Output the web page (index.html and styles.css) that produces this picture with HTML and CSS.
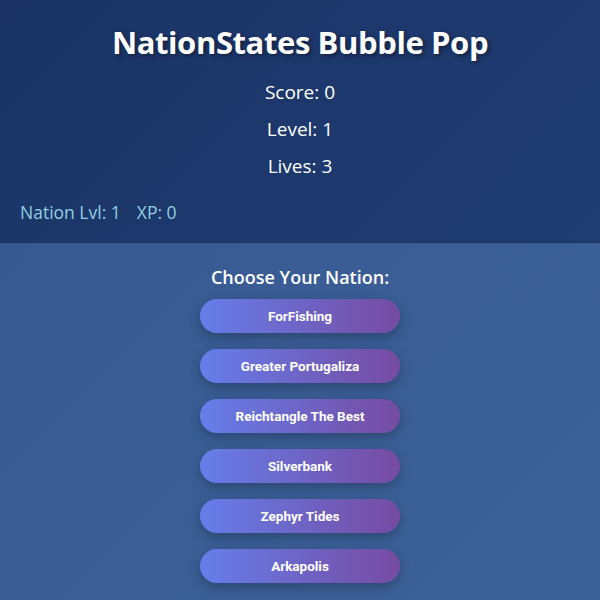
FILE: index.html
```html
<!DOCTYPE html>
<html>
<head>
<meta charset="utf-8">
<link rel="stylesheet" href="styles.css">
</head>
<body>
<div class="app">
  <header class="header">
    <h1 class="title">NationStates Bubble Pop</h1>
    <div class="stat">Score: 0</div>
    <div class="stat">Level: 1</div>
    <div class="stat">Lives: 3</div>
    <div class="nation-info"><span>Nation Lvl: 1</span><span>XP: 0</span></div>
  </header>
  <main class="chooser">
    <h2 class="choose-title">Choose Your Nation:</h2>
    <button class="nation-btn">ForFishing</button>
    <button class="nation-btn">Greater Portugaliza</button>
    <button class="nation-btn">Reichtangle The Best</button>
    <button class="nation-btn">Silverbank</button>
    <button class="nation-btn">Zephyr Tides</button>
    <button class="nation-btn">Arkapolis</button>
  </main>
</div>
</body>
</html>
```
FILE: styles.css
```css
html, body {
  margin: 0;
  padding: 0;
  height: 100%;
}
body {
  font-family: "Open Sans", "Noto Sans", sans-serif;
  color: #fff;
  background: linear-gradient(135deg, #35578f 0%, #3d6299 100%);
  overflow: hidden;
}
.app {
  display: flex;
  flex-direction: column;
  min-height: 100%;
}
.header {
  background: linear-gradient(135deg, #1b3366 0%, #1f3d72 100%);
  padding: 22px 20px 20px;
  height: 243px;
  box-sizing: border-box;
  display: flex;
  flex-direction: column;
  align-items: center;
  border-bottom: 1px solid #1a3060;
}
.title {
  margin: 0;
  font-size: 31px;
  font-weight: 700;
  letter-spacing: -0.4px;
  line-height: 41px;
  text-shadow: 2px 2px 4px rgba(0,0,0,0.4);
}
.stat {
  font-size: 19px;
  line-height: 25px;
  margin-top: 12px;
}
.stat:first-of-type {
  margin-top: 17px;
}
.nation-info {
  align-self: flex-start;
  margin-top: 21px;
  font-size: 17.5px;
  color: #90d0e0;
  display: flex;
  gap: 16px;
}
.chooser {
  display: flex;
  flex-direction: column;
  align-items: center;
  padding-top: 21px;
}
.choose-title {
  margin: 0 0 9px;
  font-size: 18px;
  font-weight: 600;
  line-height: 26px;
}
.nation-btn {
  width: 200px;
  height: 34px;
  margin-bottom: 16px;
  border: none;
  border-radius: 17px;
  background: linear-gradient(90deg, #667eea 0%, #764ba2 100%);
  color: #fff;
  font-family: Roboto, "Noto Sans", sans-serif;
  font-weight: 700;
  font-size: 13.5px;
  box-shadow: 0 4px 12px rgba(0,0,0,0.25);
}
```
